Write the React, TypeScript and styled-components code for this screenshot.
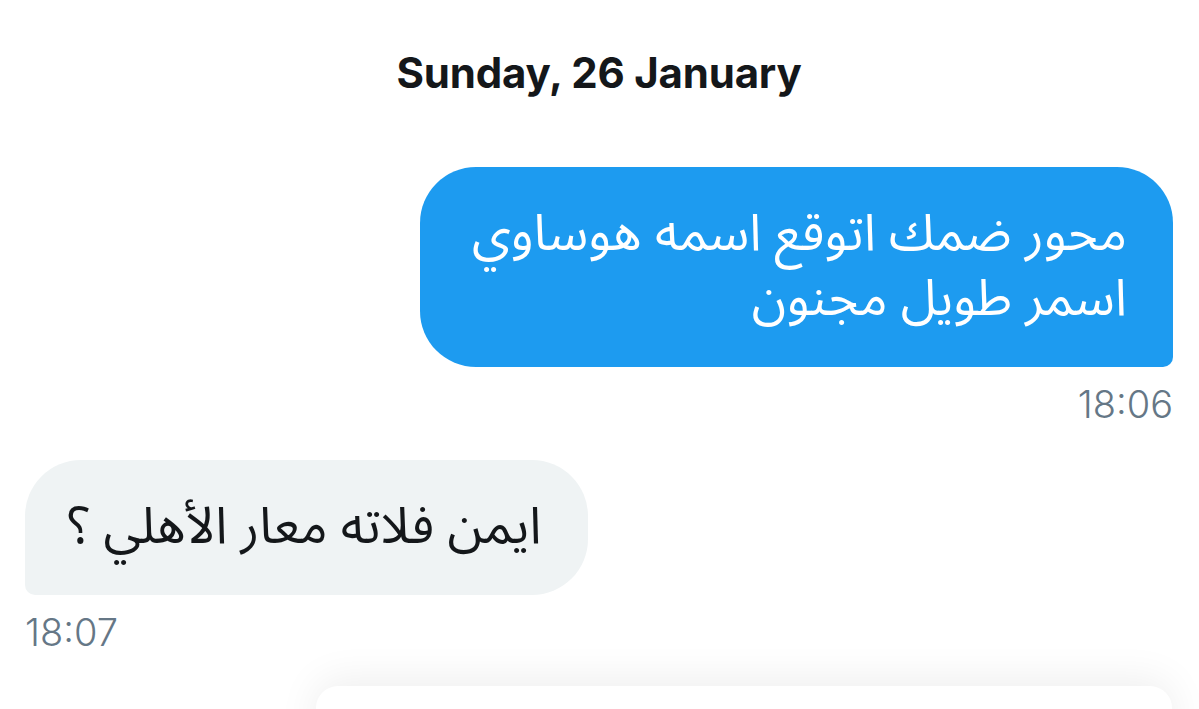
import React from "react";
import styled, { createGlobalStyle } from "styled-components";

const messages = [
  { id: 1, mine: true, lines: ["محور ضمك اتوقع اسمه هوساوي", "اسمر طويل مجنون"], time: "18:06" },
  { id: 2, mine: false, lines: ["ايمن فلاته معار الأهلي ؟"], time: "18:07" },
];

const App = () => {
  return (
    <>
      <GlobalStyle />
      <Page>
        <DateHeader>Sunday, 26 January</DateHeader>
        <Thread>
          {messages.map((msg) => (
            <Message key={msg.id} mine={msg.mine}>
              <Bubble mine={msg.mine}>
                {msg.lines.map((line, i) => (
                  <Line key={i}>{line}</Line>
                ))}
              </Bubble>
              <Time>{msg.time}</Time>
            </Message>
          ))}
        </Thread>
        <Composer />
      </Page>
    </>
  );
};

const GlobalStyle = createGlobalStyle`
  html, body {
    margin: 0;
    padding: 0;
    background: #ffffff;
    overflow: hidden;
  }
  body {
    font-family: Inter, "Liberation Sans", sans-serif;
  }
`;

const Page = styled.div`
  width: 1199px;
  height: 709px;
  display: flex;
  flex-direction: column;
  padding: 0 26px 0 25px;
  box-sizing: border-box;
  overflow: hidden;
`;

const DateHeader = styled.div`
  margin-top: 49px;
  text-align: center;
  font-size: 42px;
  font-weight: 700;
  line-height: 48px;
  color: #14171a;
  letter-spacing: -0.2px;
`;

const Thread = styled.div`
  display: flex;
  flex-direction: column;
  gap: 36px;
  margin-top: 70px;
`;

const Message = styled.div<{ mine: boolean }>`
  display: flex;
  flex-direction: column;
  align-items: ${(p) => (p.mine ? "flex-end" : "flex-start")};
`;

const Bubble = styled.div<{ mine: boolean }>`
  direction: rtl;
  font-family: "Noto Sans Arabic", "DejaVu Sans", sans-serif;
  font-size: 51px;
  line-height: 65px;
  padding: 35px 46px 35px 43px;
  color: ${(p) => (p.mine ? "#ffffff" : "#14171a")};
  background: ${(p) => (p.mine ? "#1d9bf0" : "#eff3f4")};
  border-radius: ${(p) => (p.mine ? "56px 56px 10px 56px" : "56px 56px 56px 10px")};
  ${(p) => (p.mine ? "min-width: 664px;" : "")}
`;

const Line = styled.div`
  white-space: nowrap;
`;

const Time = styled.div`
  margin-top: 17px;
  font-size: 38px;
  line-height: 40px;
  color: #657786;
  font-weight: 300;
`;

const Composer = styled.div`
  margin: 34px 1px 0 291px;
  height: 120px;
  flex-shrink: 0;
  background: #ffffff;
  border-radius: 22px;
  box-shadow: 0 -6px 40px rgba(0, 0, 0, 0.07);
`;

export default App;
